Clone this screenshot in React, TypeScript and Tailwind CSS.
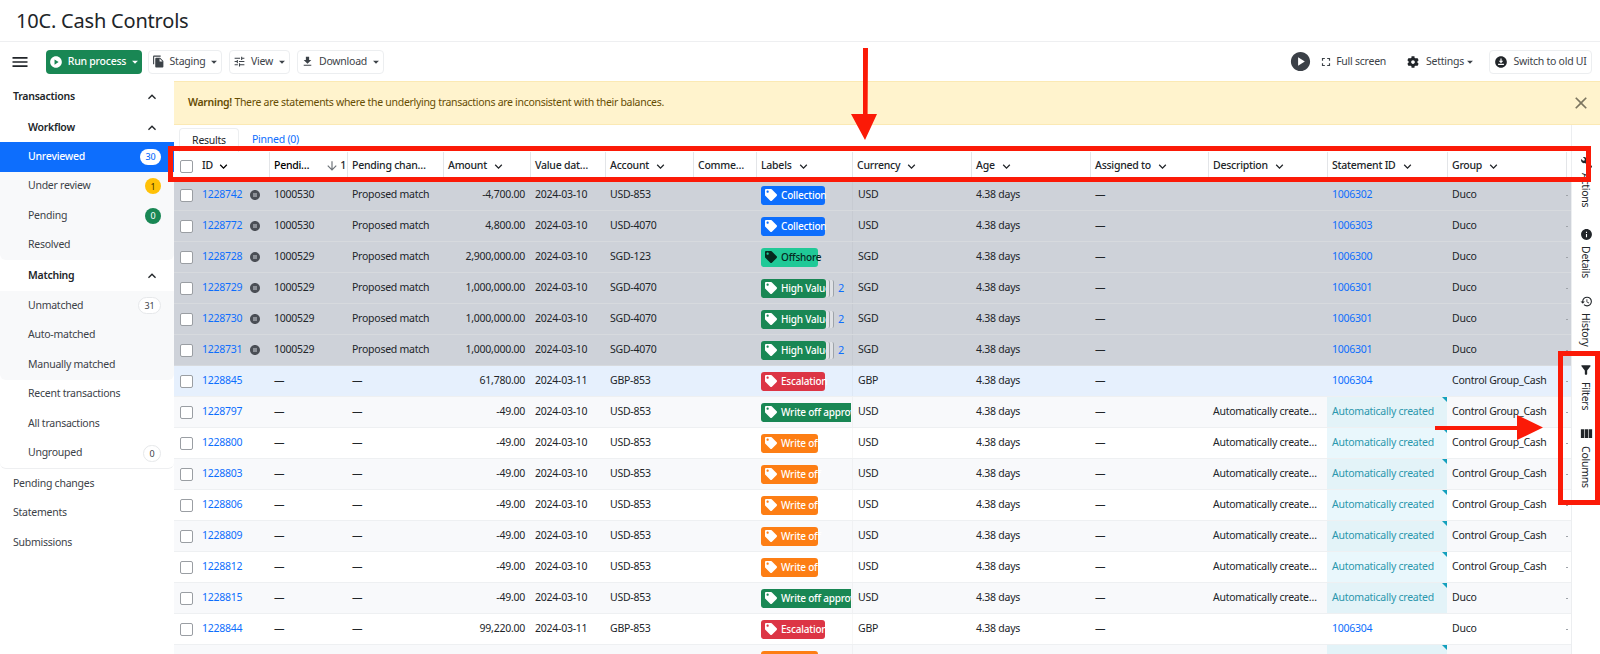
import type { ReactNode } from "react";
import {
  MdPlayCircle,
  MdFileCopy,
  MdTune,
  MdFileDownload,
  MdFullscreen,
  MdInfo,
  MdHistory,
  MdFilterAlt,
  MdViewColumn,
  MdPauseCircle,
  MdDownloadForOffline,
  MdMenu,
  MdClose,
  MdArrowDownward,
  MdKeyboardArrowDown,
  MdKeyboardArrowUp,
  MdArrowDropDown,
} from "react-icons/md";
import { FaCog, FaTag, FaWrench } from "react-icons/fa";

const cols =
  "grid grid-cols-[95px_78px_96px_87px_75px_88px_63px_96px_119px_119px_118px_119px_120px_119px_5px]";

type LabelKind = "collection" | "offshore" | "high" | "escalation" | "writeoff" | "approved";

type Row = {
  id: string;
  pending?: string;
  amount: string;
  date: string;
  account: string;
  label: LabelKind;
  currency: string;
  statement?: string;
  group: string;
  bg: string;
};

const gray = "bg-[#ced2d9]";
const alt = "bg-[#f8f9fb]";
const white = "bg-white";

const rows: Row[] = [
  { id: "1228742", pending: "1000530", amount: "-4,700.00", date: "2024-03-10", account: "USD-853", label: "collection", currency: "USD", statement: "1006302", group: "Duco", bg: gray },
  { id: "1228772", pending: "1000530", amount: "4,800.00", date: "2024-03-10", account: "USD-4070", label: "collection", currency: "USD", statement: "1006303", group: "Duco", bg: gray },
  { id: "1228728", pending: "1000529", amount: "2,900,000.00", date: "2024-03-10", account: "SGD-123", label: "offshore", currency: "SGD", statement: "1006300", group: "Duco", bg: gray },
  { id: "1228729", pending: "1000529", amount: "1,000,000.00", date: "2024-03-10", account: "SGD-4070", label: "high", currency: "SGD", statement: "1006301", group: "Duco", bg: gray },
  { id: "1228730", pending: "1000529", amount: "1,000,000.00", date: "2024-03-10", account: "SGD-4070", label: "high", currency: "SGD", statement: "1006301", group: "Duco", bg: gray },
  { id: "1228731", pending: "1000529", amount: "1,000,000.00", date: "2024-03-10", account: "SGD-4070", label: "high", currency: "SGD", statement: "1006301", group: "Duco", bg: gray },
  { id: "1228845", amount: "61,780.00", date: "2024-03-11", account: "GBP-853", label: "escalation", currency: "GBP", statement: "1006304", group: "Control Group_Cash", bg: "bg-[#e6f0fd]" },
  { id: "1228797", amount: "-49.00", date: "2024-03-10", account: "USD-853", label: "approved", currency: "USD", group: "Control Group_Cash", bg: alt },
  { id: "1228800", amount: "-49.00", date: "2024-03-10", account: "USD-853", label: "writeoff", currency: "USD", group: "Control Group_Cash", bg: white },
  { id: "1228803", amount: "-49.00", date: "2024-03-10", account: "USD-853", label: "writeoff", currency: "USD", group: "Control Group_Cash", bg: alt },
  { id: "1228806", amount: "-49.00", date: "2024-03-10", account: "USD-853", label: "writeoff", currency: "USD", group: "Control Group_Cash", bg: white },
  { id: "1228809", amount: "-49.00", date: "2024-03-10", account: "USD-853", label: "writeoff", currency: "USD", group: "Control Group_Cash", bg: alt },
  { id: "1228812", amount: "-49.00", date: "2024-03-10", account: "USD-853", label: "writeoff", currency: "USD", group: "Control Group_Cash", bg: white },
  { id: "1228815", amount: "-49.00", date: "2024-03-10", account: "USD-853", label: "approved", currency: "USD", group: "Duco", bg: alt },
  { id: "1228844", amount: "99,220.00", date: "2024-03-11", account: "GBP-853", label: "escalation", currency: "GBP", statement: "1006304", group: "Duco", bg: white },
  { id: "1228818", amount: "-49.00", date: "2024-03-10", account: "USD-853", label: "writeoff", currency: "USD", group: "Duco", bg: alt },
];

function Checkbox() {
  return <span className="block w-[13px] h-[13px] shrink-0 rounded-[2px] bg-white border border-[#9a9ea3]" />;
}

function Tag() {
  return <FaTag size={12} className="shrink-0" />;
}

function Label({ kind }: { kind: LabelKind }) {
  const base = "h-[19px] rounded-[3px] flex items-center pl-[4px] gap-[4px] text-[10px] tracking-[-0.2px] font-medium whitespace-nowrap shrink-0";
  if (kind === "collection")
    return <span className={`${base} w-[64px] bg-[#0d6efd] text-white`}><Tag />Collection</span>;
  if (kind === "offshore")
    return <span className={`${base} w-[57px] bg-[#20c997] text-[#06281e]`}><Tag />Offshore</span>;
  if (kind === "escalation")
    return <span className={`${base} w-[64px] bg-[#dc3545] text-white`}><Tag />Escalation</span>;
  if (kind === "writeoff")
    return <span className={`${base} w-[57px] bg-[#fd7e14] text-white`}><Tag />Write off</span>;
  if (kind === "approved")
    return (
      <span className={`${base} w-[90px] rounded-r-none overflow-hidden bg-[#198754] text-white`}>
        <Tag />Write off approved
      </span>
    );
  return (
    <span className="flex items-center">
      <span className={`${base} w-[65px] bg-[#198754] text-white`}><Tag />High Value</span>
      <span className="w-[4px] h-[17px] rounded-r-[2px] bg-[#dfe1e5] border-r border-[#9ea3a9]" />
      <span className="w-[4px] h-[17px] rounded-r-[2px] bg-[#dfe1e5] border-r border-[#9ea3a9]" />
      <span className="ml-[4px] text-[#0d6efd] text-[11px]">2</span>
    </span>
  );
}

function HeadCell({ title, arrow = true }: { title: string; arrow?: boolean }) {
  return (
    <div className="flex items-center min-w-0 pl-[4px] gap-[3px] font-medium text-[#212529] whitespace-nowrap border-l border-[#e3e5e8]">
      <span>{title}</span>
      {arrow && <MdKeyboardArrowDown size={15} className="shrink-0 ml-[1px]" />}
    </div>
  );
}

function Cell({ children, right = false, line = false }: { children?: ReactNode; right?: boolean; line?: boolean }) {
  return (
    <div className={`flex items-center min-w-0 overflow-hidden whitespace-nowrap px-[5px] ${right ? "justify-end" : ""} ${line ? "border-l border-[#00000008]" : ""}`}>
      {children}
    </div>
  );
}

function TableRow({ row }: { row: Row }) {
  const isAlt = row.bg === alt;
  const line = row.bg === gray ? "border-[#d7dade]" : "border-[#eef0f2]";
  return (
    <div className={`${cols} h-[31px] shrink-0 border-b ${line} text-[#212529] ${row.bg}`}>
      <div className="flex items-center pl-[6px]">
        <Checkbox />
        <a className="ml-[9px] text-[#0d6efd]">{row.id}</a>
        {row.pending && <MdPauseCircle size={12} className="ml-[7px] shrink-0 text-[#4a4e55]" />}
      </div>
      <Cell>{row.pending ?? "—"}</Cell>
      <Cell>{row.pending ? "Proposed match" : "—"}</Cell>
      <Cell right>{row.amount}</Cell>
      <Cell>{row.date}</Cell>
      <Cell>{row.account}</Cell>
      <Cell />
      <div className="flex items-center min-w-0 overflow-hidden whitespace-nowrap pl-[5px]">
        <Label kind={row.label} />
      </div>
      <Cell line>{row.currency}</Cell>
      <Cell>4.38 days</Cell>
      <Cell>—</Cell>
      <Cell>{row.statement ? "" : "Automatically create…"}</Cell>
      {row.statement ? (
        <Cell>
          <a className="text-[#0d6efd]">{row.statement}</a>
        </Cell>
      ) : (
        <div className={`relative flex items-center px-[5px] whitespace-nowrap text-[#2b97ad] ${isAlt ? "bg-[#e3f3f8]" : "bg-[#e9f7fc]"}`}>
          Automatically created
          <span className="absolute top-0 right-0 w-0 h-0 border-t-[5px] border-l-[5px] border-t-[#14a0bd] border-l-transparent" />
        </div>
      )}
      <Cell>{row.group}</Cell>
      <div className="flex items-center">
        <span className="w-[2px] h-[1px] bg-[#9ea3a9]" />
      </div>
    </div>
  );
}

function ToolButton({ icon, label, w }: { icon: ReactNode; label: string; w: string }) {
  return (
    <button className={`${w} h-[24px] flex items-center justify-center gap-[5px] rounded-[4px] border border-[#eceef0] bg-white text-[#3c4248]`}>
      {icon}
      {label}
      <MdArrowDropDown size={14} className="-mx-[3px]" />
    </button>
  );
}

function NavItem({ label, badge, active = false }: { label: string; badge?: ReactNode; active?: boolean }) {
  return (
    <div className={`h-[29.5px] flex items-center justify-between pl-[28px] pr-[13px] ${active ? "bg-[#0d6efd] text-white font-medium" : "text-[#3c4248]"}`}>
      <span>{label}</span>
      {badge}
    </div>
  );
}

function NavHead({ label, indent = false, h }: { label: string; indent?: boolean; h: string }) {
  return (
    <div className={`${h} flex items-center justify-between pr-[14px] font-semibold text-[#212529] ${indent ? "pl-[28px]" : "pl-[13px]"}`}>
      <span>{label}</span>
      <MdKeyboardArrowUp size={16} />
    </div>
  );
}

function Sidebar() {
  return (
    <aside className="w-[174px] shrink-0">
      <NavHead label="Transactions" h="h-[32px]" />
      <NavHead label="Workflow" indent h="h-[29px]" />
      <NavItem
        label="Unreviewed"
        active
        badge={<span className="h-[16px] w-[21px] rounded-full bg-white text-[#0d6efd] text-[9px] flex items-center justify-center">30</span>}
      />
      <div className="bg-[#f8f9fa] rounded-b-[6px]">
        <NavItem
          label="Under review"
          badge={<span className="h-[16px] w-[16px] rounded-full bg-[#ffc107] text-[#3c3000] text-[9px] flex items-center justify-center">1</span>}
        />
        <NavItem
          label="Pending"
          badge={<span className="h-[16px] w-[16px] rounded-full bg-[#198754] text-white text-[9px] flex items-center justify-center">0</span>}
        />
        <NavItem label="Resolved" />
      </div>
      <NavHead label="Matching" indent h="h-[31px]" />
      <div className="bg-[#f8f9fa] rounded-b-[6px]">
        <NavItem
          label="Unmatched"
          badge={<span className="h-[17px] w-[23px] rounded-full bg-white border border-[#e6e8ea] text-[#3c4248] text-[9px] flex items-center justify-center">31</span>}
        />
        <NavItem label="Auto-matched" />
        <NavItem label="Manually matched" />
      </div>
      <div className="border-b border-[#eeeff1] rounded-b-[6px]">
        <NavItem label="Recent transactions" />
        <NavItem label="All transactions" />
        <NavItem
          label="Ungrouped"
          badge={<span className="h-[17px] w-[18px] rounded-full bg-white border border-[#e6e8ea] text-[#3c4248] text-[9px] flex items-center justify-center">0</span>}
        />
      </div>
      {["Pending changes", "Statements", "Submissions"].map((s) => (
        <div key={s} className="h-[29.5px] flex items-center pl-[13px] text-[#3c4248]">{s}</div>
      ))}
    </aside>
  );
}

function RailItem({ icon, label, h }: { icon: ReactNode; label: string; h: string }) {
  return (
    <div className={`${h} flex flex-col items-center gap-[5px] text-[#212529]`}>
      {icon}
      <span className="[writing-mode:vertical-rl] leading-none">{label}</span>
    </div>
  );
}

export default function App() {
  return (
    <div className="relative w-[1600px] h-[654px] overflow-hidden bg-white text-[10.5px] tracking-[-0.25px] font-['Noto_Sans',sans-serif] flex flex-col">
      <header className="h-[42px] shrink-0 flex items-center pl-[16px] border-b border-[#eeeff1] text-[20px] tracking-[-0.2px] leading-none text-[#212529]">
        10C. Cash Controls
      </header>

      <div className="h-[39px] shrink-0 flex items-center pl-[10px] pr-[8px]">
        <MdMenu size={20} className="text-[#212529]" />
        <button className="ml-[16px] h-[24px] w-[96px] flex items-center justify-center gap-[5px] rounded-[4px] bg-[#198754] text-white font-medium">
          <MdPlayCircle size={14} />
          Run process
          <MdArrowDropDown size={14} className="-mx-[3px]" />
        </button>
        <div className="ml-[6px] flex gap-[7px]">
          <ToolButton w="w-[74px]" icon={<MdFileCopy size={13} />} label="Staging" />
          <ToolButton w="w-[61px]" icon={<MdTune size={13} />} label="View" />
          <ToolButton w="w-[87px]" icon={<MdFileDownload size={13} />} label="Download" />
        </div>
        <div className="ml-auto flex items-center text-[#3c4248]">
          <MdPlayCircle size={23} className="text-[#3b4047]" />
          <MdFullscreen size={14} className="ml-[7px]" />
          <span className="ml-[3px]">Full screen</span>
          <FaCog size={12} className="ml-[21px] text-[#212529]" />
          <span className="ml-[7px]">Settings</span>
          <MdArrowDropDown size={14} className="-ml-[1px]" />
          <button className="ml-[12px] w-[103px] h-[24px] flex items-center justify-center gap-[5px] rounded-[4px] border border-[#eceef0]">
            <MdDownloadForOffline size={14} className="text-[#212529]" />
            Switch to old UI
          </button>
        </div>
      </div>

      <div className="flex flex-1 min-h-0">
        <Sidebar />
        <main className="flex-1 min-w-0 flex flex-col">
          <div className="h-[44px] shrink-0 flex items-center justify-between pl-[14px] pr-[9px] bg-[#fff3cd] border-y border-[#fbe9b4] text-[#664d03] tracking-[-0.3px]">
            <p>
              <span className="font-semibold">Warning!</span> There are statements where the underlying transactions are inconsistent with their balances.
            </p>
            <MdClose size={20} className="text-[#7c7560]" />
          </div>

          <div className="flex flex-1 min-h-0">
            <div className="w-[1397px] shrink-0">
              <div className="h-[27px] flex items-end pl-[5px] gap-[13px]">
                <span className="h-[24px] w-[60px] flex items-center justify-center rounded-t-[4px] border border-b-0 border-[#eceef0] text-[#212529]">Results</span>
                <span className="h-[24px] flex items-center text-[#0d6efd]">Pinned (0)</span>
              </div>
              <div className={`${cols} h-[28px]`}>
                <div className="flex items-center pl-[6px]">
                  <Checkbox />
                  <span className="ml-[9px] font-medium text-[#212529]">ID</span>
                  <MdKeyboardArrowDown size={15} className="ml-[3px]" />
                </div>
                <div className="flex items-center justify-between pl-[4px] pr-[1px] font-medium border-l border-[#e3e5e8]">
                  <span>Pendi…</span>
                  <span className="flex items-center gap-[1px] text-[#212529]">
                    <MdArrowDownward size={14} className="text-[#6c7278]" />1
                  </span>
                </div>
                <HeadCell title="Pending chan…" arrow={false} />
                <HeadCell title="Amount" />
                <HeadCell title="Value dat…" arrow={false} />
                <HeadCell title="Account" />
                <HeadCell title="Comme…" arrow={false} />
                <HeadCell title="Labels" />
                <HeadCell title="Currency" />
                <HeadCell title="Age" />
                <HeadCell title="Assigned to" />
                <HeadCell title="Description" />
                <HeadCell title="Statement ID" />
                <HeadCell title="Group" />
                <div className="border-l border-[#e3e5e8]" />
              </div>
              {rows.map((r) => (
                <TableRow key={r.id} row={r} />
              ))}
            </div>

            <div className="w-[29px] shrink-0 border-l border-[#eceef0] flex flex-col items-center pt-[32px] overflow-hidden">
              <RailItem h="h-[71px]" icon={<FaWrench size={11} className="-rotate-90" />} label="Actions" />
              <RailItem h="h-[67px]" icon={<MdInfo size={13} />} label="Details" />
              <RailItem h="h-[68px]" icon={<MdHistory size={13} />} label="History" />
              <RailItem h="h-[63px]" icon={<MdFilterAlt size={14} />} label="Filters" />
              <RailItem h="h-[64px]" icon={<MdViewColumn size={15} />} label="Columns" />
            </div>
          </div>
        </main>
      </div>

      {/* annotations drawn over the screenshot */}
      <div className="absolute left-[168px] top-[146px] w-[1423px] h-[36px] border-[5px] border-[#fb1a07]" />
      <div className="absolute left-[1558px] top-[351px] w-[42px] h-[154px] border-[5px] border-[#fb1a07]" />
      <svg className="absolute left-[848px] top-[46px]" width="32" height="96" viewBox="0 0 32 96">
        <path d="M15 2h5l-.4 66H29L17 94 3 68h12z" fill="#fb1a07" />
      </svg>
      <svg className="absolute left-[1433px] top-[413px]" width="112" height="30" viewBox="0 0 112 30">
        <path d="M2 13h82V2l26 12.500L84 27V17H2z" fill="#fb1a07" />
      </svg>
    </div>
  );
}
